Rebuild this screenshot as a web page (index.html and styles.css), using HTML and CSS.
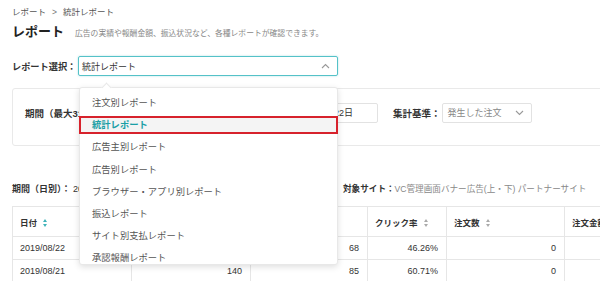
FILE: index.html
```html
<!DOCTYPE html>
<html lang="ja">
<head>
<meta charset="utf-8">
<link rel="stylesheet" href="styles.css">
</head>
<body>
<div class="page">
  <nav class="crumbs">レポート<span class="sep">&gt;</span>統計レポート</nav>
  <div class="heading">
    <h1>レポート</h1>
    <p>広告の実績や報酬金額、振込状況など、各種レポートが確認できます。</p>
  </div>
  <div class="picker">
    <span class="lbl">レポート選択：</span>
    <div class="select open">
      <span>統計レポート</span>
      <svg class="chev" width="9" height="6" viewBox="0 0 9 6"><path d="M1 5 L4.5 1.5 L8 5" fill="none" stroke="#999" stroke-width="1.1"/></svg>
      <ul class="menu">
        <li>注文別レポート</li>
        <li class="active">統計レポート</li>
        <li>広告主別レポート</li>
        <li>広告別レポート</li>
        <li>ブラウザー・アプリ別レポート</li>
        <li>振込レポート</li>
        <li>サイト別支払レポート</li>
        <li>承認報酬レポート</li>
      </ul>
    </div>
  </div>
  <section class="filters">
    <span class="lbl period">期間（最大31日）：</span>
    <div class="input date">2019年08月01日</div>
    <span class="tilde">〜</span>
    <div class="input date end">2019年08月22日</div>
    <span class="lbl basis">集計基準：</span>
    <div class="input sel">
      <span>発生した注文</span>
      <svg width="9" height="6" viewBox="0 0 9 6"><path d="M1 1 L4.5 4.5 L8 1" fill="none" stroke="#999" stroke-width="1.1"/></svg>
    </div>
  </section>
  <div class="meta">
    <div class="meta-period"><b>期間（日別）：</b> 2019年08月01日〜2019年08月22日</div>
    <div class="meta-site"><b>対象サイト：</b><span>VC管理画面バナー広告(上・下) パートナーサイト</span></div>
  </div>
  <table class="stats">
    <colgroup>
      <col class="c1"><col class="c2"><col class="c3"><col class="c4"><col class="c5"><col class="c6">
    </colgroup>
    <thead>
      <tr>
        <th>日付 <i class="sort on"></i></th>
        <th>表示回数 <i class="sort"></i></th>
        <th>クリック数 <i class="sort"></i></th>
        <th>クリック率 <i class="sort"></i></th>
        <th>注文数 <i class="sort"></i></th>
        <th>注文金額 <i class="sort"></i></th>
      </tr>
    </thead>
    <tbody>
      <tr><td>2019/08/22</td><td class="n">147</td><td class="n">68</td><td class="n">46.26%</td><td class="n">0</td><td class="n">0</td></tr>
      <tr><td>2019/08/21</td><td class="n">140</td><td class="n">85</td><td class="n">60.71%</td><td class="n">0</td><td class="n">0</td></tr>
    </tbody>
  </table>
</div>
</body>
</html>
```

FILE: styles.css
```css
html, body {
  margin: 0;
  padding: 0;
  background: #fff;
  overflow: hidden;
}
body {
  width: 600px;
  height: 281px;
  font-family: "Liberation Sans", "Noto Sans CJK JP", sans-serif;
  color: #333;
}
.page {
  padding: 6px 0 0 12px;
  width: 760px;
}
.crumbs {
  font-size: 8.5px;
  line-height: 13px;
  color: #555;
}
.crumbs .sep {
  margin: 0 6px;
  color: #777;
}
.heading {
  display: flex;
  align-items: baseline;
  margin-top: 4px;
  height: 18px;
}
.heading h1 {
  margin: 0;
  font-size: 13px;
  line-height: 18px;
  font-weight: bold;
  color: #222;
}
.heading p {
  margin: 0 0 0 11px;
  font-size: 7.8px;
  color: #888;
}
.picker {
  display: flex;
  align-items: center;
  margin-top: 15px;
}
.lbl {
  font-size: 9.5px;
  font-weight: bold;
  color: #333;
  white-space: nowrap;
}
.picker .lbl {
  width: 66px;
  font-size: 9.2px;
}
.select {
  position: relative;
  box-sizing: border-box;
  width: 260px;
  height: 20px;
  border: 1px solid #55c2c8;
  border-radius: 2px;
  box-shadow: 0 0 2px rgba(85, 194, 200, 0.5);
  display: flex;
  align-items: center;
  justify-content: space-between;
  padding: 0 7px 0 3px;
  font-size: 9px;
  color: #333;
}
.menu {
  position: absolute;
  left: 0;
  top: 30px;
  width: 259px;
  height: 178px;
  box-sizing: border-box;
  margin: 0;
  padding: 6px 0 0;
  list-style: none;
  background: #fff;
  border: 1px solid #e8e8e8;
  border-radius: 3px;
  box-shadow: 0 2px 6px rgba(0, 0, 0, 0.13);
  z-index: 5;
  display: flex;
  flex-direction: column;
  gap: 4.2px;
}
.menu::before {
  content: "";
  position: absolute;
  left: 23px;
  top: -4px;
  width: 6px;
  height: 6px;
  background: #fff;
  border-left: 1px solid #e8e8e8;
  border-top: 1px solid #e8e8e8;
  transform: rotate(45deg);
}
.menu li {
  height: 18px;
  line-height: 18px;
  padding-left: 12px;
  font-size: 9.3px;
  color: #555;
  box-sizing: border-box;
}
.menu li.active {
  border: 2px solid #d7222c;
  background: #f4f4f4;
  color: #1b9fa6;
  font-weight: bold;
  padding-left: 11px;
  line-height: 14px;
  margin: 0 -1px;
}
.filters {
  margin-top: 12px;
  box-sizing: border-box;
  height: 58px;
  border: 1px solid #e9e9e9;
  border-radius: 3px;
  display: flex;
  align-items: flex-start;
  padding: 14px 12px 0;
  gap: 8px;
}
.filters .lbl {
  line-height: 20px;
  margin-top: 1px;
}
.filters .period {
  width: 90px;
}
.filters .basis {
  margin-left: 7px;
}
.input {
  box-sizing: border-box;
  height: 20px;
  border: 1px solid #e2e2e2;
  border-radius: 2px;
  font-size: 9px;
  line-height: 18px;
  color: #333;
}
.input.date {
  width: 118px;
  padding-left: 25px;
}
.input.date.end {
  width: 111px;
  padding-left: 18px;
}
.tilde {
  width: 10px;
  font-size: 9px;
  line-height: 20px;
}
.input.sel {
  width: 90px;
  margin-left: -7px;
  display: flex;
  align-items: center;
  justify-content: space-between;
  padding: 0 7px 0 5px;
  color: #888;
}
.meta {
  display: flex;
  margin-top: 36px;
  font-size: 9px;
  line-height: 14px;
  color: #333;
}
.meta-period {
  width: 331px;
}
.meta b {
  font-weight: bold;
}
.meta-site {
  font-size: 8.6px;
}
.meta-site span {
  color: #888;
}
.stats {
  margin-top: 10px;
  border-collapse: collapse;
  table-layout: fixed;
  width: 660px;
  font-size: 9px;
  color: #333;
}
.c1 { width: 119px; }
.c2 { width: 119px; }
.c3 { width: 117px; }
.c4 { width: 79px; }
.c5 { width: 118px; }
.c6 { width: 108px; }
.stats th, .stats td {
  border: 1px solid #e6e6e6;
  padding: 0 7px;
  white-space: nowrap;
  overflow: hidden;
}
.stats th {
  height: 29px;
  text-align: left;
  font-weight: bold;
  font-size: 8.5px;
}
.stats td {
  height: 22px;
}
.stats td.n {
  text-align: right;
  padding-right: 8px;
}
.sort {
  display: inline-block;
  width: 5px;
  height: 8px;
  margin-left: 4px;
  vertical-align: -1px;
  position: relative;
}
.sort::before, .sort::after {
  content: "";
  position: absolute;
  left: 0;
  border-left: 2.5px solid transparent;
  border-right: 2.5px solid transparent;
}
.sort::before {
  top: 0;
  border-bottom: 3px solid #aaa;
}
.sort::after {
  bottom: 0;
  border-top: 3px solid #aaa;
}
.sort.on::before { border-bottom-color: #3fb3b9; }
.sort.on::after { border-top-color: #3fb3b9; }
```
